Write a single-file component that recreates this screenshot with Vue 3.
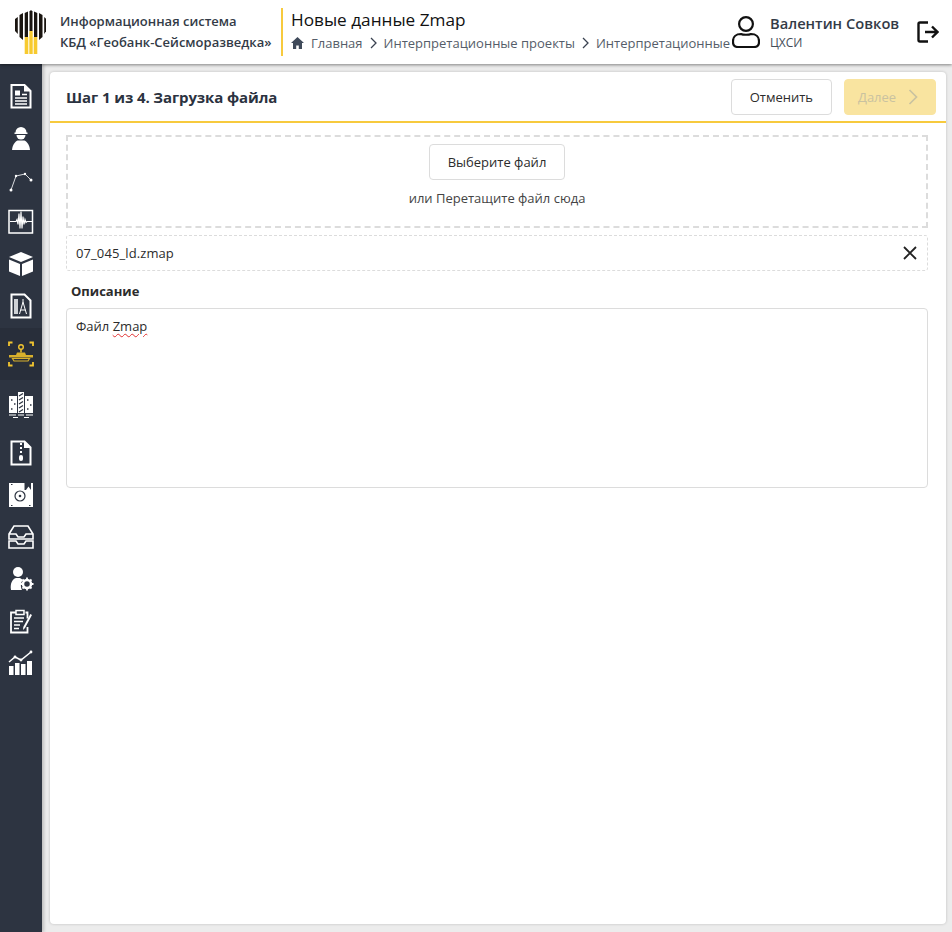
<template>
  <div class="page">
    <header class="topbar">
      <div class="brand">
        <svg class="logo" width="32" height="44" viewBox="0 0 32 44">
          <path d="M1 9l2.800-2v17L1 21z" fill="#1a1510" />
          <path d="M5.500 5l3.500-2v27l-3.500-3z" fill="#1a1510" />
          <path d="M10.700 3l3.300-1.500V27h-3.300z" fill="#1a1510" />
          <path d="M15.500 1.500 17 0l1.500 1.500V21h-3z" fill="#1a1510" />
          <path d="M20 1.500 23.300 3v24H20z" fill="#1a1510" />
          <path d="M25 3l3.500 2v22L25 30z" fill="#1a1510" />
          <path d="M30.200 7l2 2v12l-2 3z" fill="#1a1510" />
          <rect x="10.700" y="27" width="3.600" height="17" fill="#f7ca2f" />
          <rect x="15.300" y="21" width="3.400" height="23" fill="#f7ca2f" />
          <rect x="19.700" y="27" width="3.600" height="17" fill="#f7ca2f" />
        </svg>
        <div class="brand-text">
          <div>Информационная система</div>
          <div>КБД «Геобанк-Сейсморазведка»</div>
        </div>
      </div>
      <div class="title-block">
        <div class="title">Новые данные Zmap</div>
        <div class="crumbs">
          <svg width="13" height="12" viewBox="0 0 13 12"><path d="M6.500 0 13 6h-2v6H7.800V8.500H5.200V12H2V6H0z" fill="#3f4a5a" /></svg>
          <template v-for="(c, i) in crumbs" :key="c">
            <svg v-if="i" width="7" height="12" viewBox="0 0 7 12"><path d="M1 1l5 5-5 5" fill="none" stroke="#3a4250" stroke-width="1.300" /></svg>
            <span>{{ c }}</span>
          </template>
        </div>
      </div>
      <div class="user">
        <svg class="user-icon" width="28" height="32" viewBox="0 0 28 32" fill="none" stroke="#111" stroke-width="2.200">
          <circle cx="14" cy="8" r="6.900" />
          <path d="M9 18c2 1 8 1 10 0 5 0 8 3 8 7v1c0 3-2 5-5 5H6c-3 0-5-2-5-5v-1c0-4 3-7 8-7z" />
        </svg>
        <div class="user-text">
          <div class="user-name">Валентин Совков</div>
          <div class="user-org">ЦХСИ</div>
        </div>
        <svg class="logout" width="22" height="22" viewBox="0 0 22 22" fill="none" stroke="#111" stroke-width="2.400">
          <path d="M11 1.500H3C2 1.500 1.500 2 1.500 3v16c0 1 .5 1.500 1.500 1.500h8" />
          <path d="M8 11h12.500M15 5.500l5.500 5.500-5.500 5.500" />
        </svg>
      </div>
    </header>

    <div class="body">
      <nav class="sidebar">
        <div v-for="item in navItems" :key="item.id" class="nav-item" :class="item.cls">
          <svg width="26" height="26" viewBox="0 0 26 26" v-html="item.svg"></svg>
        </div>
      </nav>

      <main class="main">
        <section class="card">
          <div class="card-head">
            <h2>Шаг 1 из 4. Загрузка файла</h2>
            <div class="actions">
              <button class="btn">Отменить</button>
              <button class="btn next" disabled>
                Далее
                <svg width="10" height="16" viewBox="0 0 10 16"><path d="M1.500 1l7 7-7 7" fill="none" stroke="#c9c2a0" stroke-width="1.700" /></svg>
              </button>
            </div>
          </div>
          <div class="card-body">
            <div class="dropzone">
              <button class="btn pick">Выберите файл</button>
              <div class="hint">или Перетащите файл сюда</div>
            </div>
            <div class="file-row">
              <span class="file-name">07_045_ld.zmap</span>
              <svg width="14" height="14" viewBox="0 0 14 14"><path d="M1 1l12 12M13 1 1 13" stroke="#222" stroke-width="1.800" /></svg>
            </div>
            <div class="desc-label">Описание</div>
            <div class="desc-box">Файл <span class="misspelled">Zmap</span></div>
          </div>
        </section>
      </main>
    </div>
  </div>
</template>

<script setup>
const crumbs = ['Главная', 'Интерпретационные проекты', 'Интерпретационные']

const W = '#fff'
const D = '#2d3441'
const navItems = [
  { id: 'doc', svg: `<path d="M3.500 2h13l6 6v16.500h-19z" fill="none" stroke="${W}" stroke-width="2"/><path d="M16 2v6.500h6.500" fill="${W}"/><path d="M7 7.500h5v5H7z" fill="${W}"/><path d="M14 11.500h5M7 15h12M7 18h12M7 21h12" fill="none" stroke="${W}" stroke-width="1.500"/>` },
  { id: 'worker', svg: `<path d="M7.500 7.500a5.500 5.500 0 0 1 11 0h1V9h-13V7.500z" fill="${W}"/><path d="M8.500 10h9a4.500 4.500 0 0 1-9 0z" fill="${W}"/><path d="M9.500 15.500c-2.500 1-5 4.500-5.500 9.500h18c-.5-5-3-8.500-5.500-9.500z" fill="${W}"/>` },
  { id: 'line', svg: `<path d="M3 23 8 9l9-2 6 6" fill="none" stroke="#d8dade" stroke-width="1"/><circle cx="3" cy="23" r="1.500" fill="${W}"/><circle cx="8" cy="9" r="1.200" fill="${W}"/><circle cx="17" cy="7" r="1.200" fill="${W}"/><circle cx="23" cy="13" r="1.500" fill="${W}"/>` },
  { id: 'wave', svg: `<rect x="1" y="1.500" width="23.500" height="22.500" fill="none" stroke="${W}" stroke-width="1.500"/><path d="M2 12.500h6l1-2 1 5 1-11 1 15 1-17 1 17 1-12 1 8 1-5 1 3 1-1h6" fill="none" stroke="${W}" stroke-width="1.100"/>` },
  { id: 'cube', svg: `<path d="M13 1 25 6 13 11 1 6z" fill="${W}"/><path d="M1 8.500 12 13v12L1 20.500zM25 8.500 14 13v12l11-4.500z" fill="${W}"/>` },
  { id: 'draft', svg: `<path d="M3.500 1.500h13l6 6v17h-19z" fill="none" stroke="${W}" stroke-width="2"/><rect x="6" y="6" width="4" height="15" fill="#cfd2d6"/><path d="M15 6v3M15 9l-3.500 12M15 9l3.500 12M12.500 17h5" fill="none" stroke="${W}" stroke-width="1"/>` },
  { id: 'active', cls: 'active', svg: `<path d="M1 5V1.500h3.500M21.500 1.500H25V5M1 21v3.500h3.500M21.500 24.500H25V21" fill="none" stroke="#f2c530" stroke-width="1.800"/><circle cx="13" cy="6" r="2.300" fill="none" stroke="#f2c530" stroke-width="1.400"/><path d="M13 8.500v3" stroke="#f2c530" stroke-width="1.500"/><path d="M9 11.500h8l1 2.500H8zM1 14h24v2.500H1z" fill="#d8b02c"/><path d="M4.500 17.500h17l-1.500 2.500H6z" fill="none" stroke="#d8b02c" stroke-width="1.200"/>` },
  { id: 'drill', cls: 'after-active', svg: `<path d="M1 4h8v17H1zM17 4h8v17h-8z" fill="${W}"/><path d="M10 0h6v21h-6z" fill="${W}"/><path d="M11 4l4-2.500M11 8l4-2.500M11 12l4-2.500M11 16l4-2.500M11 20l4-2.500" stroke="${D}" stroke-width="1.300"/><path d="M3 8h1.500M6 12h1.500M3 17h1.500M19 8h1.500M22 13h1.500M19 17h1.500" stroke="${D}" stroke-width="1.300"/><path d="M1 23h7M10 23h6M18 23h7M5 25.500h5M16 25.500h5" stroke="${W}" stroke-width="1.200"/>` },
  { id: 'zip', cls: 'group-gap', svg: `<path d="M3.500 1.500h13l6 6v17h-19z" fill="none" stroke="${W}" stroke-width="2"/><path d="M16 1.500V8h6.500" fill="${W}"/><path d="M13 3v2M13 7v2M13 11v2" stroke="${W}" stroke-width="2"/><rect x="11" y="15" width="4" height="6" rx="2" fill="${W}"/>` },
  { id: 'disk', svg: `<path d="M1 1h24v24H1z" fill="${W}"/><path d="M16.500 1H23v7h-6.500z" fill="${D}"/><path d="M18 8l2.500-3.500L23 8z" fill="${W}"/><circle cx="12" cy="14" r="5" fill="none" stroke="${D}" stroke-width="1.200"/><circle cx="12" cy="14" r="1.300" fill="${D}"/><path d="M3 2.500h1.500M3 23.500h1.500M21 23.500h1.500" stroke="${D}" stroke-width="1.200"/>` },
  { id: 'tray', svg: `<path d="M1 10 6 2h14l5 8v5H1zM1 10h7l2 3h6l2-3h7" fill="none" stroke="${W}" stroke-width="1.600"/><path d="M1 17h7l2 3h6l2-3h7v7H1z" fill="none" stroke="${W}" stroke-width="1.600"/>` },
  { id: 'admin', svg: `<circle cx="10" cy="6" r="5" fill="${W}"/><path d="M3 24c-1-6 1-11 5-12h4l3 2c-2 2-3 6-1 10z" fill="${W}"/><circle cx="19" cy="18" r="4" fill="none" stroke="${W}" stroke-width="2.500"/><path d="M19 11.500v2M19 22.500v2M12.500 18h2M23.500 18h2M14.500 13.500l1.500 1.500M22 21l1.500 1.500M23.500 13.500 22 15M16 21l-1.500 1.500" stroke="${W}" stroke-width="1.800"/>` },
  { id: 'note', svg: `<path d="M17.500 4.500h2v6M19.500 19v5.500H3V4.500h5" fill="none" stroke="${W}" stroke-width="1.800"/><path d="M8 2.500h8v4H8z" fill="none" stroke="${W}" stroke-width="1.500"/><path d="M6 10h10M6 13.500h9M6 17h6M6 20.500h5" stroke="${W}" stroke-width="1.600"/><path d="M24 7l-7 13-2 2 .3-3 7-13z" fill="${W}"/>` },
  { id: 'chart', svg: `<rect x="1" y="16" width="4.500" height="9" fill="${W}"/><rect x="7" y="13" width="4.500" height="12" fill="${W}"/><rect x="13" y="14" width="4.500" height="11" fill="${W}"/><rect x="19" y="11" width="5" height="14" fill="${W}"/><path d="M1 12l6-5 6 3 10-8" fill="none" stroke="${W}" stroke-width="1.500"/><circle cx="7" cy="7" r="1.400" fill="${W}"/><circle cx="13" cy="10" r="1.400" fill="${W}"/><circle cx="23" cy="2" r="1.400" fill="${W}"/>` },
]
</script>

<style>
html,
body {
  margin: 0;
  background: #ececec;
}
</style>

<style scoped>
.page {
  width: 952px;
  height: 932px;
  display: flex;
  flex-direction: column;
  overflow: hidden;
  font-family: "Open Sans", "Noto Sans", sans-serif;
  color: #2c2c2c;
  font-size: 13px;
}

.topbar {
  height: 64px;
  flex: none;
  background: #fff;
  display: flex;
  align-items: center;
  box-shadow: 0 1px 3px rgba(0, 0, 0, 0.45);
  position: relative;
  z-index: 2;
}

.brand {
  display: flex;
  align-items: center;
  width: 281px;
  flex: none;
  padding-left: 14px;
  box-sizing: border-box;
}

.logo {
  flex: none;
}

.brand-text {
  margin-left: 14px;
  font-size: 13px;
  font-weight: 600;
  line-height: 21px;
  color: #333b47;
  white-space: nowrap;
}

.title-block {
  height: 48px;
  width: 450px;
  flex: none;
  border-left: 2px solid #f7ca3e;
  padding-left: 8px;
  box-sizing: border-box;
  overflow: hidden;
}

.title {
  font-size: 17.200px;
  font-weight: 500;
  line-height: 24px;
  color: #111;
}

.crumbs {
  display: flex;
  align-items: center;
  gap: 7px;
  font-size: 13px;
  line-height: 22px;
  color: #555d69;
  white-space: nowrap;
}

.crumbs svg {
  flex: none;
}

.user {
  display: flex;
  align-items: center;
  flex: 1;
  min-width: 0;
}

.user-icon {
  flex: none;
  margin-left: 1px;
}

.user-text {
  margin-left: 10px;
  white-space: nowrap;
}

.user-name {
  font-size: 14.700px;
  font-weight: 600;
  line-height: 22px;
  color: #333b47;
}

.user-org {
  font-size: 12px;
  line-height: 18px;
  color: #444c58;
}

.logout {
  margin-left: 18px;
  flex: none;
}

.body {
  flex: 1;
  min-height: 0;
  display: flex;
}

.sidebar {
  width: 42px;
  flex: none;
  background: #2d3441;
  padding-top: 11px;
  box-sizing: border-box;
  box-shadow: 2px 0 3px rgba(0, 0, 0, 0.2);
}

.nav-item {
  height: 42px;
  display: flex;
  align-items: center;
  justify-content: center;
}

.nav-item.active {
  height: 52px;
  margin-top: 1px;
  background: #282e3a;
}

.nav-item.after-active {
  margin-top: 4px;
}

.nav-item.group-gap {
  margin-top: 6px;
}

.main {
  flex: 1;
  min-width: 0;
  padding: 8px 6px 8px 8px;
  display: flex;
}

.card {
  flex: 1;
  min-width: 0;
  background: #fff;
  border-radius: 4px;
  box-shadow: 0 0 3px rgba(0, 0, 0, 0.2);
}

.card-head {
  height: 51px;
  box-sizing: border-box;
  border-bottom: 2px solid #f7ca3e;
  padding: 0 10px 0 16px;
  display: flex;
  align-items: center;
  justify-content: space-between;
}

.card-head h2 {
  margin: 0;
  font-size: 15px;
  font-weight: 700;
  letter-spacing: -0.1px;
  color: #2b3240;
}

.actions {
  display: flex;
  gap: 12px;
}

.btn {
  height: 36px;
  padding: 0 18px;
  background: #fff;
  border: 1px solid #dcdcdc;
  border-radius: 4px;
  font: inherit;
  font-size: 13px;
  color: #2c2c2c;
}

.btn.next {
  width: 92px;
  padding: 0 17px 0 13px;
  background: #f9e4a0;
  border-color: #f9e4a0;
  color: #c9c2a0;
  display: flex;
  align-items: center;
  justify-content: space-between;
}

.card-body {
  padding: 12px 18px 0 16px;
}

.dropzone {
  height: 93px;
  box-sizing: border-box;
  border: 2px dashed #dcdcdc;
  padding-top: 7px;
  display: flex;
  flex-direction: column;
  align-items: center;
}

.btn.pick {
  width: 136px;
  padding: 0;
}

.hint {
  margin-top: 9px;
  line-height: 18px;
  color: #444;
}

.file-row {
  height: 36px;
  margin-top: 7px;
  box-sizing: border-box;
  border: 1px dashed #dcdcdc;
  border-radius: 3px;
  padding: 0 10px 0 9px;
  display: flex;
  align-items: center;
  justify-content: space-between;
}

.file-name {
  letter-spacing: 0.1px;
}

.desc-label {
  margin: 11px 0 0 5px;
  font-weight: 700;
  line-height: 18px;
  color: #2c2c2c;
}

.desc-box {
  height: 180px;
  margin-top: 8px;
  box-sizing: border-box;
  border: 1px solid #dcdcdc;
  border-radius: 4px;
  padding: 8px 9px;
  line-height: 18px;
}

.misspelled {
  text-decoration: underline wavy #e03030 1px;
  text-underline-offset: 2px;
}
</style>
